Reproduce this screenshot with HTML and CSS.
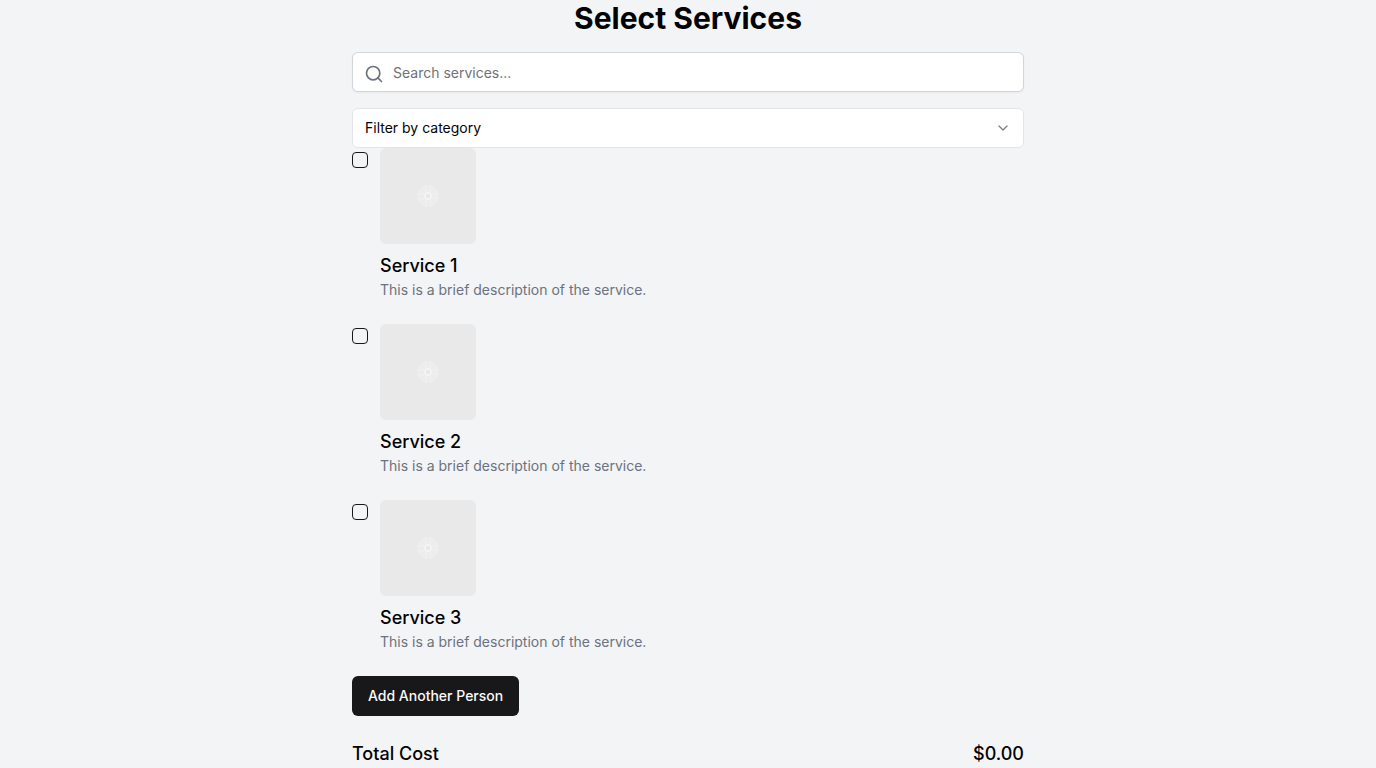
FILE: index.html
```html
<!DOCTYPE html>
<html lang="en">
<head>
<meta charset="utf-8">
<meta name="viewport" content="width=device-width, initial-scale=1">
<title>Select Services</title>
<link rel="stylesheet" href="styles.css">
</head>
<body>
<svg class="symbols" aria-hidden="true">
  <symbol id="placeholder" viewBox="0 0 96 96">
    <g fill="none" stroke="#eeeeee">
      <circle cx="48" cy="48" r="7.5" stroke-width="6" stroke-dasharray="4.9 1" />
      <circle cx="48" cy="48" r="10.5" stroke-width="1" stroke-dasharray="4 1.5" />
      <circle cx="48" cy="48" r="3.2" stroke="#f6f6f6" stroke-width="1.6" />
    </g>
  </symbol>
</svg>
<main class="page">
  <h1 class="page-title">Select Services</h1>
  <div class="filters">
    <div class="field">
      <svg class="search-icon" viewBox="0 0 24 24" aria-hidden="true"><circle cx="11" cy="11" r="8"/><path d="m21 21-4.3-4.3"/></svg>
      <input class="control search" type="search" placeholder="Search services..." aria-label="Search services">
    </div>
    <div class="field">
      <select class="control select" aria-label="Filter by category">
        <option>Filter by category</option>
      </select>
      <svg class="chevron" viewBox="0 0 24 24" aria-hidden="true"><path d="m6 9 6 6 6-6"/></svg>
    </div>
  </div>
  <div class="services">
    <div class="service">
      <input class="checkbox" type="checkbox" id="service-1">
      <label class="service-body" for="service-1">
        <svg class="thumb" aria-hidden="true"><use href="#placeholder"/></svg>
        <span class="service-name">Service 1</span>
        <span class="service-text">This is a brief description of the service.</span>
      </label>
    </div>
    <div class="service">
      <input class="checkbox" type="checkbox" id="service-2">
      <label class="service-body" for="service-2">
        <svg class="thumb" aria-hidden="true"><use href="#placeholder"/></svg>
        <span class="service-name">Service 2</span>
        <span class="service-text">This is a brief description of the service.</span>
      </label>
    </div>
    <div class="service">
      <input class="checkbox" type="checkbox" id="service-3">
      <label class="service-body" for="service-3">
        <svg class="thumb" aria-hidden="true"><use href="#placeholder"/></svg>
        <span class="service-name">Service 3</span>
        <span class="service-text">This is a brief description of the service.</span>
      </label>
    </div>
    <button class="add-button" type="button">Add Another Person</button>
    <div class="total"><span>Total Cost</span><span>$0.00</span></div>
  </div>
</main>
</body>
</html>
```
FILE: styles.css
```css
*, *::before, *::after { box-sizing: border-box; }

body {
  margin: 0;
  background: #f3f4f6;
  color: #020203;
  font-family: Inter, "Liberation Sans", sans-serif;
  font-size: 14px;
  line-height: 20px;
}

.symbols { position: absolute; width: 0; height: 0; }

.page {
  max-width: 672px;
  margin: 0 auto;
}

.page-title {
  margin: 0 0 16px;
  font-size: 30px;
  line-height: 36px;
  font-weight: 700;
  text-align: center;
}

.filters {
  display: grid;
  gap: 16px;
}

.field {
  display: grid;
  position: relative;
}

.control {
  appearance: none;
  width: 100%;
  height: 40px;
  margin: 0;
  padding: 8px 12px;
  border: 1px solid #e4e4e7;
  border-radius: 6px;
  background: #ffffff;
  color: inherit;
  font: inherit;
}

.search {
  padding-left: 40px;
  border-color: #d1d5db;
  box-shadow: 0 1px 2px rgb(0 0 0 / 5%);
}

.search::placeholder { color: #71717a; opacity: 1; }

.search-icon,
.chevron {
  position: absolute;
  fill: none;
  stroke: #6b7280;
  stroke-width: 2;
  stroke-linecap: round;
  stroke-linejoin: round;
  pointer-events: none;
}

.search-icon {
  top: 12px;
  left: 12px;
  width: 20px;
  height: 20px;
}

.chevron {
  top: 12px;
  right: 13px;
  width: 16px;
  height: 16px;
  stroke: #808083;
}

.services {
  display: flex;
  flex-direction: column;
  align-items: flex-start;
  gap: 24px;
}

.service {
  display: flex;
  align-items: flex-start;
  gap: 12px;
}

.checkbox {
  appearance: none;
  flex: none;
  width: 16px;
  height: 16px;
  margin: 4px 0 0;
  border: 1px solid #18181b;
  border-radius: 4px;
}

.checkbox:checked { background: #18181b; }

.service-body {
  display: flex;
  flex-direction: column;
}

.thumb {
  width: 96px;
  height: 96px;
  margin-bottom: 8px;
  border-radius: 6px;
  background: #e9e9e9;
}

.service-name {
  font-size: 18px;
  line-height: 28px;
  font-weight: 500;
}

.service-text { color: #6b7280; }

.add-button {
  height: 40px;
  padding: 8px 16px;
  border: 0;
  border-radius: 6px;
  background: #18181b;
  color: #fafafa;
  font: inherit;
  font-weight: 500;
}

.total {
  display: flex;
  justify-content: space-between;
  align-self: stretch;
  font-size: 18px;
  line-height: 28px;
  font-weight: 500;
}
```
